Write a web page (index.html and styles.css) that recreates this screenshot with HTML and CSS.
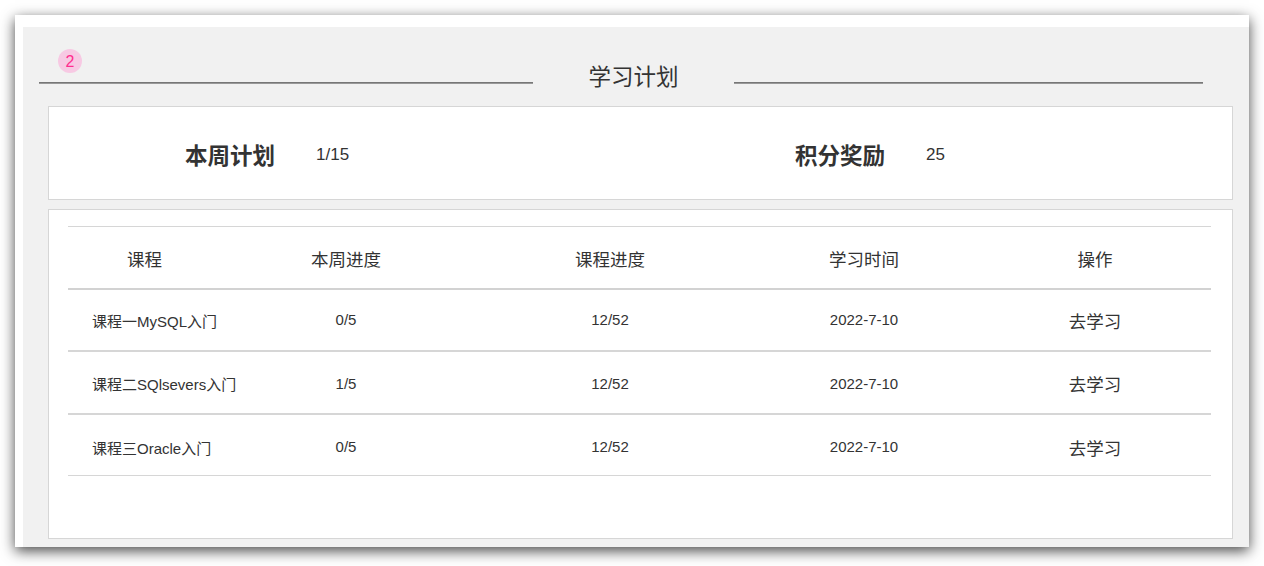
FILE: index.html
```html
<!DOCTYPE html>
<html lang="zh-CN">
<head>
<meta charset="utf-8">
<title>学习计划</title>
<link rel="stylesheet" href="styles.css">
</head>
<body>
<main class="card">
  <div class="inner">
    <span class="badge">2</span>
    <header class="title-row">
      <span class="rule rule-left"></span>
      <h1 class="title">学习计划</h1>
      <span class="rule rule-right"></span>
    </header>
    <section class="panel summary">
      <div class="stat stat-a"><strong class="stat-label">本周计划</strong><span class="stat-value">1/15</span></div>
      <div class="stat stat-b"><strong class="stat-label">积分奖励</strong><span class="stat-value">25</span></div>
    </section>
    <section class="panel list">
      <div class="row head">
        <div class="cell">课程</div><div class="cell">本周进度</div><div class="cell">课程进度</div><div class="cell">学习时间</div><div class="cell">操作</div>
      </div>
      <div class="row item first">
        <div class="cell name">课程一MySQL入门</div><div class="cell num">0/5</div><div class="cell num">12/52</div><div class="cell num">2022-7-10</div><div class="cell action">去学习</div>
      </div>
      <div class="row item second">
        <div class="cell name">课程二SQlsevers入门</div><div class="cell num">1/5</div><div class="cell num">12/52</div><div class="cell num">2022-7-10</div><div class="cell action">去学习</div>
      </div>
      <div class="row item last">
        <div class="cell name">课程三Oracle入门</div><div class="cell num">0/5</div><div class="cell num">12/52</div><div class="cell num">2022-7-10</div><div class="cell action">去学习</div>
      </div>
    </section>
  </div>
</main>
</body>
</html>
```
FILE: styles.css
```css
* { box-sizing: border-box; }
html, body { height: 100%; }
body {
  margin: 0;
  padding: 15px 15px 19px;
  background: #fff;
  color: #333;
  font-family: "Liberation Sans", "Noto Sans CJK SC", sans-serif;
  overflow: hidden;
}
.card {
  height: 532px;
  padding: 12px 0 0 8px;
  background: #fff;
  box-shadow: 0 4px 13px rgba(0,0,0,.72);
}
.inner {
  position: relative;
  height: 520px;
  background: #f1f1f1;
  padding: 0 16px 0 25px;
}
.badge {
  position: absolute;
  left: 35px;
  top: 22px;
  width: 24px;
  height: 24px;
  border-radius: 50%;
  background: #f7c9e3;
  color: #ff2d8f;
  font-size: 16px;
  line-height: 25px;
  text-align: center;
}
.title-row {
  display: flex;
  align-items: flex-start;
  height: 79px;
  margin-left: -9px;
}
.rule {
  display: block;
  height: 2px;
  margin-top: 55px;
  background: linear-gradient(#777 50%, #999 50%);
}
.rule-left { width: 494px; }
.rule-right { width: 469px; }
.title {
  width: 201px;
  margin: 37px 0 0;
  font-size: 22.5px;
  line-height: 28px;
  font-weight: 400;
  text-align: center;
  color: #333;
}
.panel {
  width: 1185px;
  background: #fff;
  border: 1px solid #d6d6d6;
}
.summary {
  display: flex;
  height: 94px;
}
.stat { display: flex; flex: none; align-items: center; width: 610px; padding: 8px 0 0 136px; }
.stat-label {
  width: 131px;
  font-size: 22.5px;
  line-height: 30px;
  font-weight: 700;
  color: #333;
}
.stat-value { font-size: 17px; line-height: 20px; margin-top: -4px; }
.list {
  height: 330px;
  margin-top: 9px;
  padding: 16px 21px 0 19px;
}
.row {
  display: grid;
  grid-template-columns: 153px 250px 278px 230px 232px;
  align-items: center;
  width: 1143px;
}
.cell { text-align: center; }
.head {
  height: 64px;
  padding-top: 4px;
  border-top: 1px solid #d6d6d6;
  border-bottom: 2px solid #d2d2d2;
  font-size: 17.5px;
  line-height: 24px;
}
.item { border-bottom: 2px solid #d6d6d6; font-size: 15px; }
.first { height: 62px; padding-top: 4px; }
.second { height: 63px; padding-top: 5px; }
.last { height: 61px; padding-top: 8px; border-bottom-width: 1px; }
.cell.name { text-align: left; padding-left: 24px; white-space: nowrap; line-height: 20px; margin-top: 0; }
.num { line-height: 20px; margin-top: -4px; }
.second .num { margin-top: -2px; }
.action { font-size: 17.5px; line-height: 24px; }
```
